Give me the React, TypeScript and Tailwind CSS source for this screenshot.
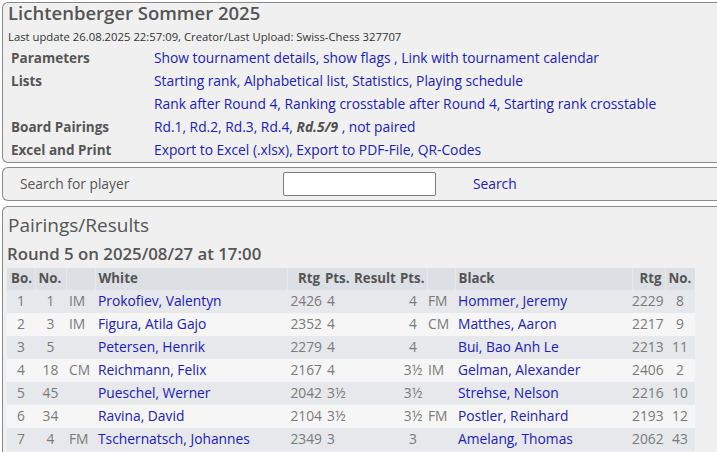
import React from "react";

const BLUE = "text-[#2020b8]";

type Row = [string, string, string, string, string, string, string, string, string, string, string];

const rows: Row[] = [
  ["1", "1", "IM", "Prokofiev, Valentyn", "2426", "4", "4", "FM", "Hommer, Jeremy", "2229", "8"],
  ["2", "3", "IM", "Figura, Atila Gajo", "2352", "4", "4", "CM", "Matthes, Aaron", "2217", "9"],
  ["3", "5", "", "Petersen, Henrik", "2279", "4", "4", "", "Bui, Bao Anh Le", "2213", "11"],
  ["4", "18", "CM", "Reichmann, Felix", "2167", "4", "3½", "IM", "Gelman, Alexander", "2406", "2"],
  ["5", "45", "", "Pueschel, Werner", "2042", "3½", "3½", "", "Strehse, Nelson", "2216", "10"],
  ["6", "34", "", "Ravina, David", "2104", "3½", "3½", "FM", "Postler, Reinhard", "2193", "12"],
  ["7", "4", "FM", "Tschernatsch, Johannes", "2349", "3", "3", "", "Amelang, Thomas", "2062", "43"],
];

function InfoRow({ label, children }: { label: string; children: React.ReactNode }) {
  return (
    <div className="flex h-[23px] items-center">
      <div className="w-[151px] shrink-0 pl-[8px] text-[13.5px] font-bold text-[#555]">{label}</div>
      <div className={`whitespace-nowrap text-[13.8px] ${BLUE}`}>{children}</div>
    </div>
  );
}

export default function App() {
  return (
    <div
      className="h-[452px] w-[717px] overflow-hidden bg-white text-[13px]"
      style={{ fontFamily: '"Open Sans", "Noto Sans", sans-serif' }}
    >
      <div className="pl-[2px] pt-[2px]">
        {/* Header box */}
        <div className="rounded-l-[6px] border border-r-0 border-[#8a8a8a] bg-[#f0f0f0]">
          <div className="h-[19px] pl-[5px] text-[18.5px] font-semibold leading-[19px] text-[#555]">
            Lichtenberger Sommer 2025
          </div>
          <div className="flex h-[25px] items-center pl-[5px] pt-[5px] text-[11.3px] text-[#333]">
            Last update 26.08.2025 22:57:09, Creator/Last Upload: Swiss-Chess 327707
          </div>
          <InfoRow label="Parameters">
            Show tournament details, show flags , Link with tournament calendar
          </InfoRow>
          <InfoRow label="Lists">Starting rank, Alphabetical list, Statistics, Playing schedule</InfoRow>
          <InfoRow label="">Rank after Round 4, Ranking crosstable after Round 4, Starting rank crosstable</InfoRow>
          <InfoRow label="Board Pairings">
            Rd.1, Rd.2, Rd.3, Rd.4, <span className="font-bold italic text-[#505050]">Rd.5/9</span> , not paired
          </InfoRow>
          <InfoRow label="Excel and Print">Export to Excel (.xlsx), Export to PDF-File, QR-Codes</InfoRow>
        </div>

        {/* Search box */}
        <div className="mt-[4px] flex h-[34px] items-center rounded-l-[6px] border border-r-0 border-[#8a8a8a] bg-[#f0f0f0] text-[13.8px]">
          <div className="w-[280px] pl-[17px] text-[#555]">Search for player</div>
          <div className="h-[24px] w-[153px] rounded-[2px] border border-[#7a7a7a] bg-white" />
          <div className={`ml-[37px] ${BLUE}`}>Search</div>
        </div>

        {/* Pairings box */}
        <div className="mt-[5px] h-[260px] rounded-l-[6px] border border-r-0 border-[#8a8a8a] bg-[#f0f0f0]">
          <div className="flex h-[32px] items-end pb-[2px] pl-[5px] text-[19px] leading-[24px] text-[#555]">
            Pairings/Results
          </div>
          <div className="flex h-[29px] items-center pl-[4px] pt-[1px] text-[16.8px] font-semibold text-[#555]">
            Round 5 on 2025/08/27 at 17:00
          </div>
          <table className="ml-[4px] w-[688px] table-fixed border-collapse">
            <colgroup>
              <col className="w-[28px]" />
              <col className="w-[31px]" />
              <col className="w-[29px]" />
              <col className="w-[192px]" />
              <col className="w-[36px]" />
              <col className="w-[29px]" />
              <col className="w-[47px]" />
              <col className="w-[28px]" />
              <col className="w-[28px]" />
              <col className="w-[177px]" />
              <col className="w-[33px]" />
              <col className="w-[30px]" />
            </colgroup>
            <thead>
              <tr className="h-[22px] bg-[#dcdfe4] text-[13.3px] font-bold text-[#555]">
                <th className="pl-[4px] text-left font-bold">Bo.</th>
                <th className="border-l border-[#e6e8ec] pl-[3px] text-left font-bold">No.</th>
                <th className="border-l border-[#e6e8ec]" />
                <th className="border-l border-[#e6e8ec] pl-[3px] text-left font-bold">White</th>
                <th className="border-l border-[#e6e8ec] pr-[3px] text-right font-bold">Rtg</th>
                <th className="pl-[2px] text-left font-bold">Pts.</th>
                <th className="pl-[2px] text-left font-bold">Result</th>
                <th className="pl-[1px] text-left font-bold">Pts.</th>
                <th className="border-l border-[#e6e8ec]" />
                <th className="border-l border-[#e6e8ec] pl-[3px] text-left font-bold">Black</th>
                <th className="border-l border-[#e6e8ec] pr-[3px] text-right font-bold">Rtg</th>
                <th className="border-l border-[#e6e8ec] pl-[3px] text-left font-bold">No.</th>
              </tr>
            </thead>
            <tbody>
              {rows.map((r, i) => (
                <tr
                  key={i}
                  className={`h-[23px] text-[13.8px] ${i % 2 === 0 ? "bg-[#e6e8eb]" : "bg-[#f6f6f6]"} text-[#7a7a7a]`}
                >
                  <td className="text-center">{r[0]}</td>
                  <td className="text-center">{r[1]}</td>
                  <td className="pl-[3px]">{r[2]}</td>
                  <td className={`whitespace-nowrap pl-[3px] ${BLUE}`}>{r[3]}</td>
                  <td className="whitespace-nowrap pr-[1px] text-right">{r[4]}</td>
                  <td className="pl-[4px]">{r[5]}</td>
                  <td />
                  <td className="text-center">{r[6]}</td>
                  <td className="pl-[1px]">{r[7]}</td>
                  <td className={`whitespace-nowrap pl-[3px] ${BLUE}`}>{r[8]}</td>
                  <td className="whitespace-nowrap pr-[3px] text-right">{r[9]}</td>
                  <td className="text-center">{r[10]}</td>
                </tr>
              ))}
            </tbody>
          </table>
        </div>
      </div>
    </div>
  );
}
